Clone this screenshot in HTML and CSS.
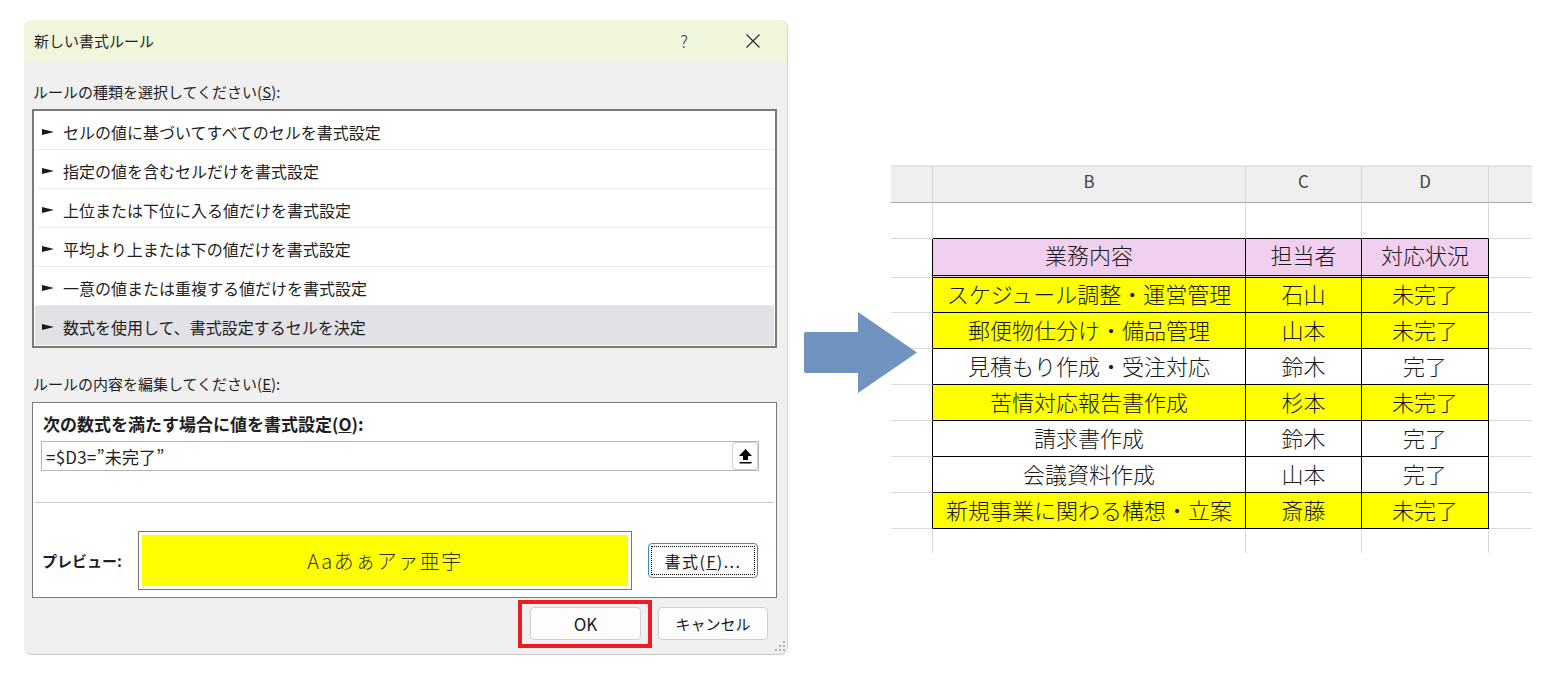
FILE: index.html
```html
<!DOCTYPE html>
<html lang="ja">
<head>
    <meta charset="UTF-8">
    <meta name="viewport" content="width=device-width, initial-scale=1.0">
    <title>新しい書式ルール</title>
    <link rel="stylesheet" href="styles.css">
</head>
<body>
    <div class="page">
        <div class="dialog">
            <div class="titlebar">
                <span class="title">新しい書式ルール</span>
                <span class="help">?</span>
                <svg class="close" width="14" height="14" viewBox="0 0 14 14"><path d="M0.5 0.5 L13.5 13.5 M13.5 0.5 L0.5 13.5" stroke="#2b2b2b" stroke-width="1.2" fill="none"/></svg>
            </div>

            <div class="dialog-body">
                <div class="label">ルールの種類を選択してください(<u>S</u>):</div>
                <div class="rule-list">
                    <div class="rule-item"><svg class="pointer" width="12" height="6" viewBox="0 0 12 6"><path d="M0 0 L12 3 L0 6 Z" fill="#1a1a1a"/></svg>セルの値に基づいてすべてのセルを書式設定</div>
                    <div class="rule-item"><svg class="pointer" width="12" height="6" viewBox="0 0 12 6"><path d="M0 0 L12 3 L0 6 Z" fill="#1a1a1a"/></svg>指定の値を含むセルだけを書式設定</div>
                    <div class="rule-item"><svg class="pointer" width="12" height="6" viewBox="0 0 12 6"><path d="M0 0 L12 3 L0 6 Z" fill="#1a1a1a"/></svg>上位または下位に入る値だけを書式設定</div>
                    <div class="rule-item"><svg class="pointer" width="12" height="6" viewBox="0 0 12 6"><path d="M0 0 L12 3 L0 6 Z" fill="#1a1a1a"/></svg>平均より上または下の値だけを書式設定</div>
                    <div class="rule-item"><svg class="pointer" width="12" height="6" viewBox="0 0 12 6"><path d="M0 0 L12 3 L0 6 Z" fill="#1a1a1a"/></svg>一意の値または重複する値だけを書式設定</div>
                    <div class="rule-item selected"><svg class="pointer" width="12" height="6" viewBox="0 0 12 6"><path d="M0 0 L12 3 L0 6 Z" fill="#1a1a1a"/></svg>数式を使用して、書式設定するセルを決定</div>
                </div>

                <div class="label label-edit">ルールの内容を編集してください(<u>E</u>):</div>
                <div class="edit-box">
                    <div class="formula-label">次の数式を満たす場合に値を書式設定(<u>O</u>):</div>
                    <div class="formula-input">
                        <span class="formula-text">=$D3=”未完了”</span>
                        <span class="ref-btn"><svg width="13" height="15" viewBox="0 0 13 15"><path d="M6.5 0 L13 7 L9 7 L9 11 L4 11 L4 7 L0 7 Z" fill="#000"/><rect x="0.5" y="13" width="12" height="1.5" fill="#000"/></svg></span>
                    </div>
                    <div class="divider"></div>
                    <div class="preview-row">
                        <span class="preview-label">プレビュー:</span>
                        <div class="preview"><div class="preview-fill">Aaあぁアァ亜宇</div></div>
                        <button class="btn format-btn">書式(<u>F</u>)...</button>
                    </div>
                </div>

                <div class="button-row">
                    <span class="highlight"><button class="btn ok-btn">OK</button></span>
                    <button class="btn cancel-btn">キャンセル</button>
                </div>
            </div>

            <svg class="grip" width="12" height="12" viewBox="0 0 12 12">
                <rect x="9" y="1" width="2" height="2" fill="#b3b3b3"/>
                <rect x="5" y="5" width="2" height="2" fill="#b3b3b3"/>
                <rect x="9" y="5" width="2" height="2" fill="#b3b3b3"/>
                <rect x="1" y="9" width="2" height="2" fill="#b3b3b3"/>
                <rect x="5" y="9" width="2" height="2" fill="#b3b3b3"/>
                <rect x="9" y="9" width="2" height="2" fill="#b3b3b3"/>
            </svg>
        </div>

        <svg class="arrow" width="113" height="81" viewBox="0 0 113 81"><path d="M2 20 H54 V0 L113 40.5 L54 81 V61 H2 Q0 61 0 59 V22 Q0 20 2 20 Z" fill="#7093bf"/></svg>

        <div class="sheet">
            <div class="cell col-head"></div>
            <div class="cell col-head">B</div>
            <div class="cell col-head">C</div>
            <div class="cell col-head">D</div>
            <div class="cell col-head edge"></div>

            <div class="cell"></div>
            <div class="cell above"></div>
            <div class="cell above"></div>
            <div class="cell above"></div>
            <div class="cell edge"></div>

            <div class="cell rowhead"></div>
            <div class="cell t th">業務内容</div>
            <div class="cell t th">担当者</div>
            <div class="cell t th">対応状況</div>
            <div class="cell edge"></div>

            <div class="cell rowhead"></div>
            <div class="cell t hit">スケジュール調整・運営管理</div>
            <div class="cell t hit">石山</div>
            <div class="cell t hit">未完了</div>
            <div class="cell edge"></div>

            <div class="cell rowhead"></div>
            <div class="cell t hit">郵便物仕分け・備品管理</div>
            <div class="cell t hit">山本</div>
            <div class="cell t hit">未完了</div>
            <div class="cell edge"></div>

            <div class="cell rowhead"></div>
            <div class="cell t">見積もり作成・受注対応</div>
            <div class="cell t">鈴木</div>
            <div class="cell t">完了</div>
            <div class="cell edge"></div>

            <div class="cell rowhead"></div>
            <div class="cell t hit">苦情対応報告書作成</div>
            <div class="cell t hit">杉本</div>
            <div class="cell t hit">未完了</div>
            <div class="cell edge"></div>

            <div class="cell rowhead"></div>
            <div class="cell t">請求書作成</div>
            <div class="cell t">鈴木</div>
            <div class="cell t">完了</div>
            <div class="cell edge"></div>

            <div class="cell rowhead"></div>
            <div class="cell t">会議資料作成</div>
            <div class="cell t">山本</div>
            <div class="cell t">完了</div>
            <div class="cell edge"></div>

            <div class="cell rowhead"></div>
            <div class="cell t hit">新規事業に関わる構想・立案</div>
            <div class="cell t hit">斎藤</div>
            <div class="cell t hit">未完了</div>
            <div class="cell edge"></div>

            <div class="cell tail"></div>
            <div class="cell tail"></div>
            <div class="cell tail"></div>
            <div class="cell tail"></div>
            <div class="cell tail edge"></div>
        </div>
    </div>
</body>
</html>
```

FILE: styles.css
```css
body {
    margin: 0;
    background-color: #fff;
    font-family: "Noto Sans CJK JP", "Noto Sans", sans-serif;
    color: #1f1f1f;
}
.page {
    display: flex;
    align-items: flex-start;
    width: 1560px;
    height: 680px;
    overflow: hidden;
}

/* dialog */
.dialog {
    position: relative;
    flex-shrink: 0;
    width: 764px;
    height: 635px;
    margin: 20px 0 0 24px;
    box-sizing: border-box;
    background-color: #f0f0f0;
    border-right: 1px solid #d4d4d4;
    border-bottom: 1px solid #c8c8c8;
    border-radius: 8px;
    overflow: hidden;
}
.titlebar {
    display: flex;
    align-items: center;
    height: 41px;
    padding-left: 10px;
    background-color: #f0f7dd;
    font-size: 15px;
}
.titlebar .title {
    flex: 1;
}
.help {
    width: 20px;
    margin-right: 52px;
    text-align: center;
    font-size: 17px;
    font-weight: 300;
    color: #333;
}
.close {
    margin-right: 27px;
}
.dialog-body {
    padding: 21px 10px 0 8px;
}
.label {
    font-size: 15px;
    line-height: 20px;
    padding-left: 1px;
}
.label-edit {
    margin-top: 26px;
}
.rule-list {
    margin-top: 7px;
    padding: 0 1px 1px;
    background-color: #fff;
    border: 2px solid #7a7a7a;
}
.rule-item {
    display: flex;
    align-items: center;
    height: 39px;
    box-sizing: border-box;
    padding: 3px 0 0 7px;
    border-bottom: 1px solid #ebebeb;
    font-size: 16px;
}
.rule-item.selected {
    background-color: #e1e1e6;
    border-bottom: none;
}
.pointer {
    margin-right: 9px;
    flex-shrink: 0;
}
.edit-box {
    margin-top: 8px;
    padding: 11px 17px 7px 8px;
    background-color: #fff;
    border: 1px solid #7a7a7a;
}
.formula-label {
    margin-left: 2px;
    font-size: 17px;
    font-weight: 700;
    line-height: 20px;
}
.formula-input {
    display: flex;
    align-items: center;
    height: 30px;
    margin-top: 7px;
    box-sizing: border-box;
    padding-left: 4px;
    border: 1px solid #b4b4b4;
    font-size: 17px;
}
.formula-text {
    flex: 1;
    letter-spacing: 0.2px;
}
.ref-btn {
    display: flex;
    align-items: center;
    justify-content: center;
    width: 26px;
    height: 28px;
    box-sizing: border-box;
    background-color: #fcfcfc;
    border: 1px solid #d0d0d0;
    border-radius: 3px;
}
.divider {
    margin: 31px -15px 0 -6px;
    border-top: 1px solid #c8c8c8;
}
.preview-row {
    display: flex;
    align-items: center;
    height: 59px;
    margin-top: 28px;
}
.preview-label {
    width: 96px;
    padding-left: 1px;
    font-size: 15px;
    font-weight: 700;
}
.preview {
    width: 494px;
    height: 59px;
    box-sizing: border-box;
    padding: 3px;
    border: 1px solid #767676;
}
.preview-fill {
    display: flex;
    align-items: center;
    justify-content: center;
    height: 100%;
    background-color: #ffff00;
    font-size: 20px;
    font-weight: 300;
    letter-spacing: 1.5px;
    color: #333;
}
.btn {
    height: 33px;
    padding: 0;
    background-color: #fdfdfd;
    border: 1px solid #d0d0d0;
    border-radius: 4px;
    font-family: inherit;
    font-size: 15px;
    color: #1a1a1a;
}
.format-btn {
    width: 110px;
    height: 35px;
    margin-left: 16px;
    border-color: #3d8ad6;
    outline: 1px dotted #000;
    outline-offset: -4px;
    font-size: 16px;
    letter-spacing: 1.5px;
}
.button-row {
    display: flex;
    justify-content: flex-end;
    align-items: flex-start;
    margin-top: 2px;
    padding-right: 9px;
}
.highlight {
    display: block;
    padding: 3px 7px 4px 8px;
    border: 4px solid #ed1c24;
}
.ok-btn {
    display: block;
    width: 111px;
    font-size: 17px;
}
.cancel-btn {
    width: 110px;
    margin: 7px 0 0 6px;
}
.grip {
    position: absolute;
    right: 1px;
    bottom: 2px;
}

/* arrow between dialog and sheet */
.arrow {
    position: relative;
    z-index: 1;
    flex-shrink: 0;
    margin: 312px -26px 0 16px;
}

/* spreadsheet */
.sheet {
    display: grid;
    grid-template-columns: 42px 313px 116px 127px 43px;
    grid-template-rows: 38px 36px 39px 35px repeat(6, 36px) 24px;
    margin-top: 165px;
    flex-shrink: 0;
}
.cell {
    display: flex;
    align-items: center;
    justify-content: center;
    box-sizing: border-box;
    border-right: 1px solid #dadada;
    border-bottom: 1px solid #dadada;
    color: #1a1a1a;
    white-space: nowrap;
}
.col-head {
    padding-bottom: 8px;
    background-color: #efefef;
    border-top: 2px solid #e2e8d2;
    border-right-color: #d6d6d6;
    border-bottom-color: #a9a9a9;
    font-size: 17px;
    color: #444;
}
.edge {
    border-right: none;
}
.above {
    border-bottom-color: #000;
}
.rowhead {
    border-right-color: #000;
}
.t {
    padding-bottom: 4px;
    border-right-color: #000;
    border-bottom-color: #000;
    font-size: 22px;
    font-weight: 300;
}
.th {
    padding-bottom: 7px;
    background-color: #f1cfee;
    border-bottom: 3px double #000;
}
.hit {
    background-color: #ffff00;
}
.tail {
    border-bottom: none;
}
```
